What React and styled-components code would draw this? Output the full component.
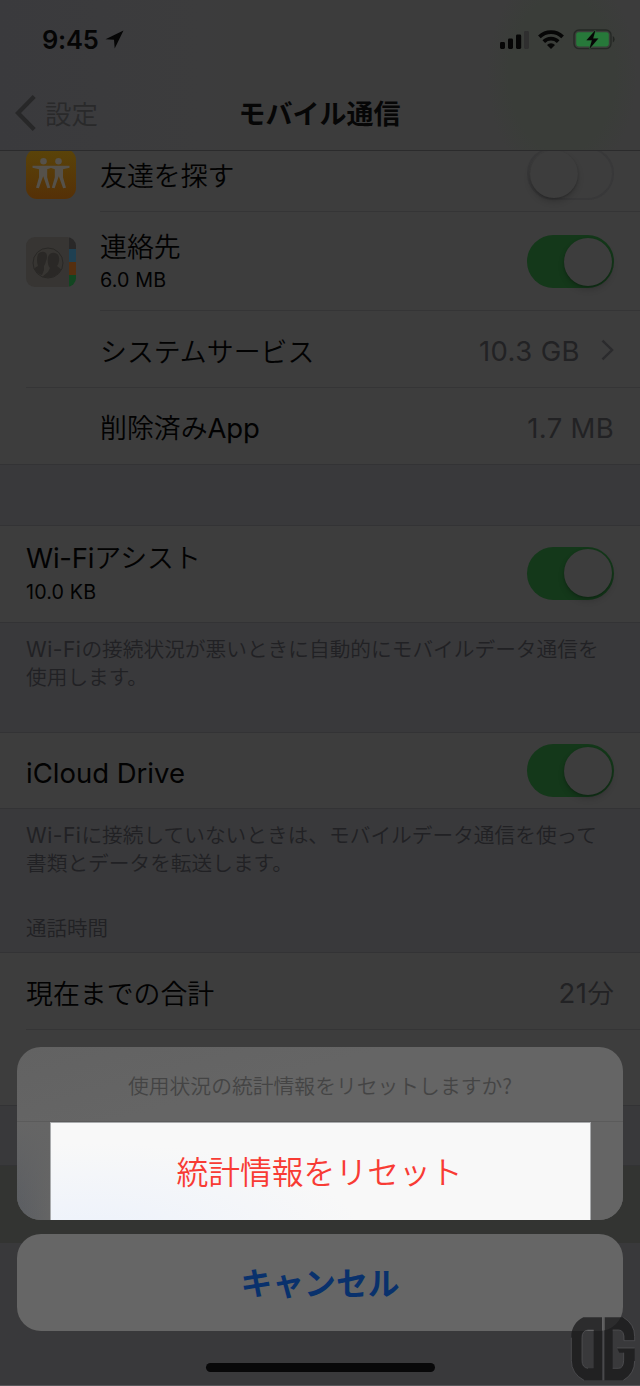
import React from 'react';
import styled, { createGlobalStyle, css } from 'styled-components';

const GlobalStyle = createGlobalStyle`
    * {
        box-sizing: border-box;
    }

    body {
        margin: 0;
        background: #39393b;
        font-family: 'Noto Sans CJK JP', sans-serif;
        font-weight: 350;
    }
`;

const Phone = styled.div`
    position: relative;
    width: 640px;
    height: 1386px;
    overflow: hidden;
    background: #39393b;
    border-bottom: 1px solid #57575a;
`;

const Header = styled.header`
    position: relative;
    z-index: 1;
    height: 151px;
    margin-bottom: -16px;
    border-bottom: 1px solid #2b2b2c;
    background: radial-gradient(ellipse 75px 110px at 562px 75px, #3a3d39 70%, rgba(58, 61, 57, 0) 100%),
        linear-gradient(90deg, #3a3a3d 0, #3c3c3d 200px, #3c3c3c 240px);
`;

const StatusBar = styled.div`
    display: flex;
    justify-content: space-between;
    height: 76px;
    padding: 0 25px 0 42px;
`;

const StatusGroup = styled.div`
    display: flex;
    align-items: center;
    gap: ${(props) => props.$gap};
    height: 79px;
`;

const Clock = styled.span`
    font: 600 25.5px/30px Inter, sans-serif;
    letter-spacing: -0.2px;
    color: #050505;
`;

const NavBar = styled.div`
    display: grid;
    grid-template-columns: 160px 319px 161px;
    align-items: center;
    height: 73px;
`;

const BackLink = styled.div`
    display: flex;
    align-items: center;
    gap: 9px;
    padding-left: 15px;
    font-size: 26.5px;
    line-height: 36px;
    color: #29292a;
`;

const NavTitle = styled.h1`
    margin: 0;
    font-size: 27px;
    line-height: 36px;
    font-weight: 700;
    text-align: center;
    color: #060606;
`;

const Group = styled.section`
    background: #3d3d3d;
    border-bottom: 1px solid #333335;
`;

const Row = styled.div`
    display: flex;
    align-items: center;
    height: ${(props) => props.$height}px;
    padding: 0 26px;
    background: ${(props) =>
        props.$line
            ? `linear-gradient(#353536, #353536) ${props.$line}px 100% / 640px 1px no-repeat`
            : 'none'};
    ${(props) => props.$muted && css`
        background: #333432;
    `}
`;

const IconSlot = styled.div`
    width: 74px;
    height: 50px;
    flex: none;
`;

const Labels = styled.div`
    flex: 1;
    padding-top: ${(props) => props.$drop || 0}px;
    padding-bottom: ${(props) => props.$lift || 0}px;
`;

const Label = styled.div`
    font-size: 26.9px;
    line-height: 36px;
    color: #020202;
    white-space: nowrap;
`;

const Latin = styled.span`
    font-family: Inter, 'Noto Sans CJK JP', sans-serif;
    font-size: ${(props) => props.$size || 27.5}px;
    font-weight: 400;
    letter-spacing: ${(props) => props.$spacing || '-0.2px'};
`;

const Usage = styled.div`
    font: 400 19.7px/26px Inter, sans-serif;
    letter-spacing: 0.15px;
    margin-top: 3px;
    color: #020202;
`;

const Value = styled.span`
    padding-top: 2px;
    font-size: 26.5px;
    line-height: 36px;
    color: #222224;
`;

const Switch = styled.div`
    display: flex;
    justify-content: ${(props) => (props.$on ? 'flex-end' : 'flex-start')};
    width: 87px;
    height: 53px;
    margin-top: ${(props) => (props.$raised ? -2 : 0)}px;
    padding: 2.5px;
    border-radius: 27px;
    background: ${(props) => (props.$on ? '#14381a' : '#3d3d3d')};
    box-shadow: ${(props) => (props.$on ? 'none' : 'inset 0 0 0 2px #383839')};

    &::after {
        content: '';
        width: 48px;
        height: 48px;
        border-radius: 50%;
        background: #3d3d3d;
        box-shadow: 0 4px 6px rgba(0, 0, 0, 0.16), 0 1px 2px rgba(0, 0, 0, 0.2);
    }
`;

const Footnote = styled.p`
    height: ${(props) => props.$height}px;
    margin: 0;
    padding: 12px 26px 0;
    font-size: 20.7px;
    line-height: 27px;
    color: #212124;
    white-space: nowrap;
    border-bottom: ${(props) => (props.$height === 110 ? '1px solid #333335' : 'none')};
`;

const SectionTitle = styled.h2`
    height: 39px;
    margin: 0;
    padding: 0 26px;
    font-size: 20.5px;
    line-height: 26px;
    font-weight: 350;
    color: #212124;
    border-bottom: 1px solid #333335;
`;

const Gap = styled.div`
    height: ${(props) => props.$height}px;
    border-bottom: 1px solid #333335;
`;

const ActionSheet = styled.div`
    position: absolute;
    left: 17px;
    right: 17px;
    top: 1047px;
    display: flex;
    flex-direction: column;
    gap: 14px;
`;

const Panel = styled.div`
    height: 173px;
    border-radius: 24px;
    background: linear-gradient(165deg, #626262 0, #656565 30%, #656565 100%);
    overflow: hidden;
`;

const SheetTitle = styled.div`
    height: 74px;
    padding-top: 24px;
    font-size: 20.8px;
    line-height: 28px;
    text-align: center;
    color: #444;
`;

const ResetArea = styled.div`
    height: 99px;
    padding: 0 32px 0 33px;
    border-top: 1px solid #5b5b5b;
    background: linear-gradient(rgba(101, 101, 101, 1), rgba(101, 101, 101, 0)),
        linear-gradient(90deg, #5a5d62, #656565 34px);
`;

const ResetButton = styled.button`
    display: block;
    width: 541px;
    height: 98px;
    padding: 0 2px 3px 0;
    border: 1px solid #a9abad;
    border-bottom: 0;
    background: radial-gradient(ellipse 270px 90px at 40px 110px, #edf2fb, #f8f8f8);
    font: 350 31.8px/44px 'Noto Sans CJK JP', sans-serif;
    color: #f83b34;
`;

const CancelButton = styled.button`
    height: 97px;
    padding: 0 0 4px;
    border: 0;
    border-radius: 24px;
    background: #666;
    font: 700 31.8px/44px 'Noto Sans CJK JP', sans-serif;
    color: #09316c;
`;

const HomeIndicator = styled.div`
    position: absolute;
    left: 206px;
    top: 1363px;
    width: 229px;
    height: 9px;
    border-radius: 5px;
    background: #080809;
`;

const Watermark = styled.svg`
    position: absolute;
    left: 560px;
    top: 1306px;
`;

function LocationIcon() {
    return (
        <svg width="19" height="19" viewBox="0 0 19 19">
            <path d="M18.5 .5 9.7 18.5 9 9.8 .5 9.3z" fill="#060606" />
        </svg>
    );
}

function SignalIcon() {
    return (
        <svg width="29" height="20" viewBox="0 0 29 20" fill="#060606">
            <rect x="0" y="12" width="5" height="7" rx="1.4" />
            <rect x="8" y="8.5" width="5" height="10.5" rx="1.4" />
            <rect x="16" y="4.5" width="5.2" height="14.5" rx="1.4" />
            <rect x="24" y="1" width="5" height="18" rx="1.4" fill="#2f2f2f" />
        </svg>
    );
}

function WifiIcon() {
    return (
        <svg width="26" height="20" viewBox="0 0 26 20">
            <g fill="none" stroke="#060606" strokeWidth="3.7">
                <path d="M1.4 6.9a16.4 16.4 0 0 1 23.2 0" />
                <path d="M5.8 11.6a10.2 10.2 0 0 1 14.4 0" />
            </g>
            <path d="M13 19l-4-4a5.6 5.6 0 0 1 8 0z" fill="#060606" />
        </svg>
    );
}

function BatteryIcon() {
    return (
        <svg width="42" height="21" viewBox="0 0 42 21">
            <rect x="1" y="1" width="37" height="18.6" rx="5" fill="none" stroke="#252825" strokeWidth="1.4" />
            <rect x="3.2" y="3.2" width="32.6" height="14.2" rx="2.4" fill="#27793a" />
            <path d="M39.8 7v6.5q1.8-1 1.8-3.2T39.8 7z" fill="#222522" />
            <path
                d="M22.5 1 13.5 11.2h5.4L16.4 20 25.3 9.6h-5.2z"
                fill="#060606"
                stroke="#2c6337"
                strokeWidth="1"
                paintOrder="stroke"
            />
        </svg>
    );
}

function FriendsIcon() {
    return (
        <svg width="50" height="50" viewBox="0 0 50 50">
            <defs>
                <linearGradient id="friends" x2="0" y2="1">
                    <stop offset="0" stopColor="#5a4409" />
                    <stop offset="1" stopColor="#553007" />
                </linearGradient>
            </defs>
            <rect width="50" height="50" rx="11" fill="url(#friends)" />
            <g fill="#55514a">
                <circle cx="17.5" cy="12.2" r="3.3" />
                <circle cx="32.5" cy="12.2" r="3.3" />
                <path d="M6.5 16.7h37v2l-6.5 1.6v8l3 10.4-2.9.6-4.3-12-4.2 12-2.8-.6 3-10.4v-8l-3.8-1.2-3.8 1.2v8l3 10.4-2.8.6-4.2-12-4.3 12-2.9-.6 3-10.4v-8l-6.5-1.6z" />
            </g>
        </svg>
    );
}

function ContactsIcon() {
    return (
        <svg width="50" height="50" viewBox="0 0 50 50">
            <defs>
                <clipPath id="book">
                    <rect width="50" height="50" rx="9" />
                </clipPath>
                <clipPath id="portrait">
                    <circle cx="22" cy="26" r="14.5" />
                </clipPath>
            </defs>
            <g clipPath="url(#book)">
                <path d="M0 0h43v50H0z" fill="#373533" />
                <path d="M43 0h7v12h-7z" fill="#292828" />
                <path d="M43 12h7v13h-7z" fill="#1f4052" />
                <path d="M43 25h7v13h-7z" fill="#552f10" />
                <path d="M43 38h7v12h-7z" fill="#124621" />
            </g>
            <circle cx="22" cy="26" r="15" fill="#373532" stroke="#292826" strokeWidth="1" />
            <g clipPath="url(#portrait)" fill="#2a2826">
                <path d="M12 17q4-4 8-1 2 3 0 8-1 4-2 5v4l-2 5q-5-1-9-6l5-3q-2-6 0-12z" />
                <path d="M22 20q2-5 7-4 5 1 4 8-.6 4-2 5l6 5q-5 7-15 7-4 0-6-1l6-5 2-4q-3-3-2-11z" />
            </g>
        </svg>
    );
}

function Chevron() {
    return (
        <svg width="13" height="22" viewBox="0 0 14 24" fill="none" stroke="#2b2b2d" strokeWidth="2.6">
            <path d="M1.5 1.8 12 12 1.5 22.2" />
        </svg>
    );
}

export default function MobileDataSettings() {
    return (
        <Phone>
            <GlobalStyle />
            <Header>
                <StatusBar>
                    <StatusGroup $gap="6px">
                        <Clock>9:45</Clock>
                        <LocationIcon />
                    </StatusGroup>
                    <StatusGroup $gap="9px">
                        <SignalIcon />
                        <WifiIcon />
                        <BatteryIcon />
                    </StatusGroup>
                </StatusBar>
                <NavBar>
                    <BackLink>
                        <svg width="21" height="36" viewBox="0 0 21 36" fill="none" stroke="#272728" strokeWidth="4.2">
                            <path d="M19.2 1.5 3 18l16.2 16.5" />
                        </svg>
                        設定
                    </BackLink>
                    <NavTitle>モバイル通信</NavTitle>
                </NavBar>
            </Header>

            <Group>
                <Row $height={77} $line={100}>
                    <IconSlot><FriendsIcon /></IconSlot>
                    <Labels $drop={2}><Label>友達を探す</Label></Labels>
                    <Switch />
                </Row>
                <Row $height={99} $line={100}>
                    <IconSlot><ContactsIcon /></IconSlot>
                    <Labels $lift={3}>
                        <Label>連絡先</Label>
                        <Usage>6.0 MB</Usage>
                    </Labels>
                    <Switch $on />
                </Row>
                <Row $height={77} $line={26}>
                    <IconSlot />
                    <Labels $drop={2}><Label>システムサービス</Label></Labels>
                    <Value style={{ marginRight: 21 }}><Latin $spacing="0.4px">10.3 GB</Latin></Value>
                    <Chevron />
                </Row>
                <Row $height={76}>
                    <IconSlot />
                    <Labels $drop={3}><Label>削除済み<Latin>App</Latin></Label></Labels>
                    <Value><Latin $spacing="0.3px">1.7 MB</Latin></Value>
                </Row>
            </Group>
            <Gap $height={61} />

            <Group>
                <Row $height={96}>
                    <Labels $lift={4}>
                        <Label><Latin>Wi-Fi</Latin>アシスト</Label>
                        <Usage>10.0 KB</Usage>
                    </Labels>
                    <Switch $on $raised />
                </Row>
            </Group>
            <Footnote $height={110}>
                <Latin $size={21} $spacing="0.5px">Wi-Fi</Latin>の接続状況が悪いときに自動的にモバイルデータ通信を<br />
                使用します。
            </Footnote>

            <Group>
                <Row $height={75}>
                    <Labels $drop={3}><Label><Latin $spacing="0">iCloud Drive</Latin></Label></Labels>
                    <Switch $on />
                </Row>
            </Group>
            <Footnote $height={105}>
                <Latin $size={21} $spacing="0.5px">Wi-Fi</Latin>に接続していないときは、モバイルデータ通信を使って<br />
                書類とデータを転送します。
            </Footnote>
            <SectionTitle>通話時間</SectionTitle>

            <Group>
                <Row $height={77} $line={26}>
                    <Labels $drop={2}><Label>現在までの合計</Label></Labels>
                    <Value><Latin $spacing="0.5px">21</Latin>分</Value>
                </Row>
                <Row $height={75} />
            </Group>
            <Gap $height={60} />
            <Row $height={77} $muted />

            <ActionSheet>
                <Panel>
                    <SheetTitle>使用状況の統計情報をリセットしますか?</SheetTitle>
                    <ResetArea>
                        <ResetButton>統計情報をリセット</ResetButton>
                    </ResetArea>
                </Panel>
                <CancelButton>キャンセル</CancelButton>
            </ActionSheet>
            <HomeIndicator />
            <Watermark width="80" height="80" viewBox="0 0 240 240">
                <g fill="#19191b" fillOpacity="0.75" fillRule="evenodd">
                    <path d="M70 34h56v189H72C48 210 34 190 34 165V92C34 65 48 45 70 34zM84 72Q66 74 66 95v68q0 22 18 24h17V72z" />
                    <path d="M134 34h56q34 20 34 58v12h-32q2-32-16-32h-18v115h18q14 0 15-24v-23h-13l-7-14h53v39q0 38-34 58h-56z" />
                </g>
                <g fill="none" stroke="#58585b" strokeWidth="2">
                    <path d="M130 34v189M34 95v68q0 40 38 60M101 72H84Q66 74 66 95v68q0 22 18 24M190 34q34 20 34 58v12h-32q2-32-16-32h-18M224 126h-53M224 165q0 38-34 58M158 187h18q14 0 15-24v-23" />
                </g>
            </Watermark>
        </Phone>
    );
}
